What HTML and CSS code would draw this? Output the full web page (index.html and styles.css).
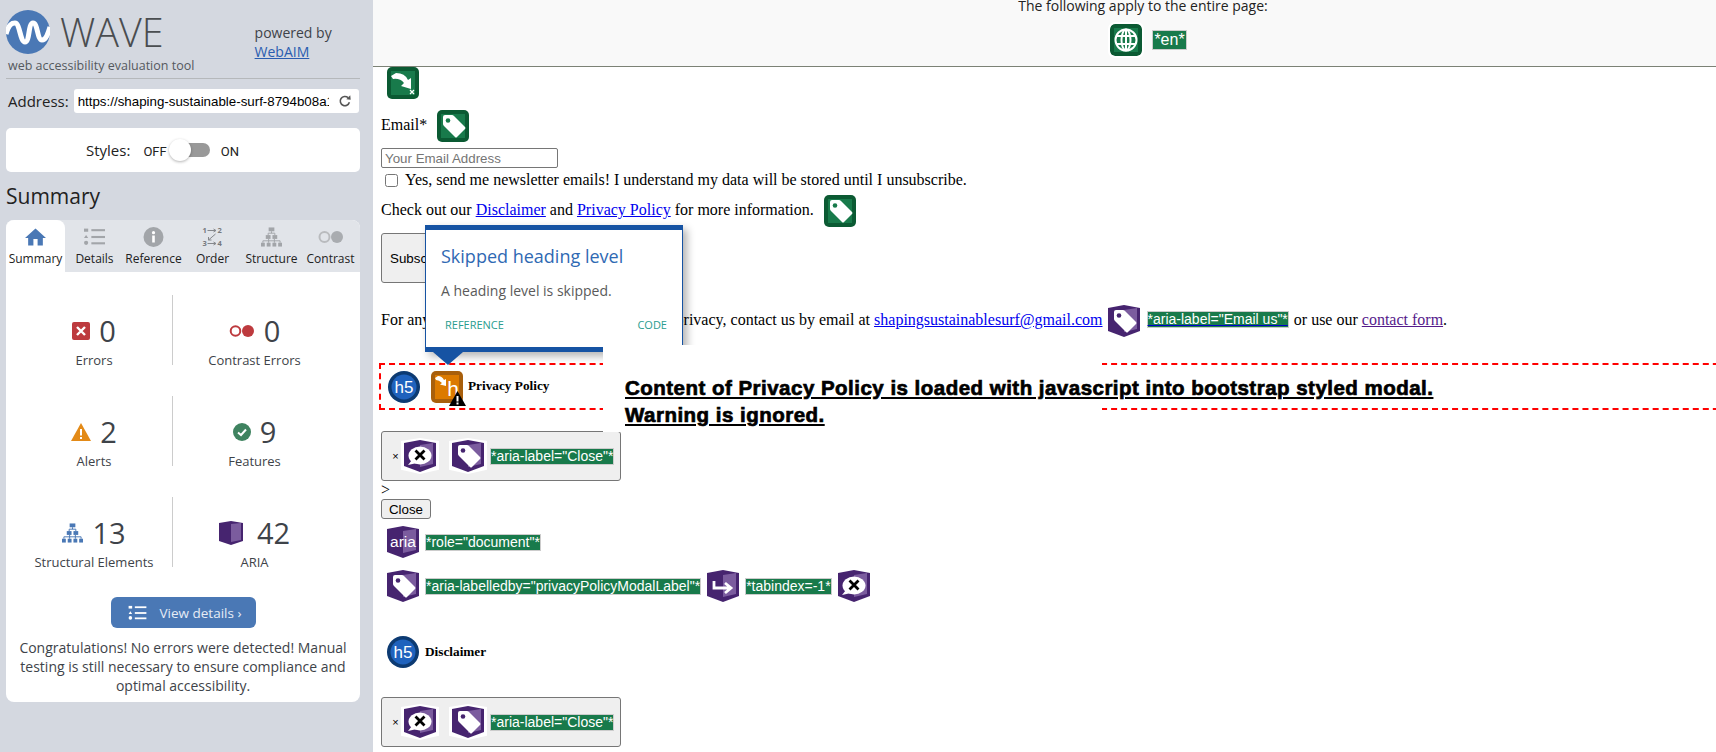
FILE: index.html
```html
<!DOCTYPE html>
<html lang="en">
<head>
  <meta charset="UTF-8">
  <title>WAVE Report</title>
  <link rel="stylesheet" href="styles.css">
</head>
<body>
  <svg class="defs" aria-hidden="true">
    <symbol id="bg-green" viewBox="0 0 32 32">
      <rect width="32" height="32" rx="5" fill="#0b5a33"/>
      <rect x="4" y="4" width="24" height="24" fill="#187a4b"/>
    </symbol>
    <symbol id="bg-purple" viewBox="0 0 32 32">
      <path d="M0 3 16 0 32 3V26L16 32 0 26Z" fill="#46246f"/>
      <path d="M16 5 29 3V24L16 27Z" fill="#7b5c9e"/>
    </symbol>
    <symbol id="tag" viewBox="0 0 32 32">
      <path d="M6 7q0-2 2-2h7q1 0 2 1l11 11q1 1 0 2l-8 8q-1 1-2 0L7 16q-1-1-1-2Z" fill="#fff"/>
    </symbol>
    <symbol id="talk" viewBox="0 0 32 32">
      <ellipse cx="16" cy="15.500" rx="11.500" ry="9" fill="#fff"/>
      <path d="M8 20 4 25 13 23Z" fill="#fff"/>
      <path d="M11.500 10.500 20.500 19.500M20.500 10.500 11.500 19.500" stroke="#000" stroke-width="2.800"/>
    </symbol>
    <symbol id="skip" viewBox="0 0 32 32">
      <path d="M4 9 9 6Q18 6 21 13L24 11 24 22 14 19 17 16Q13 11 6 12Z" fill="#fff"/>
    </symbol>
  </svg>

  <aside class="sidebar">
    <div class="brand">
      <svg class="logo" viewBox="0 0 44 44">
        <circle cx="22" cy="22" r="22" fill="#4a78b5"/>
        <path d="M0 24C3 14 6 13 9 13 14 13 14 32 19 32 24 32 22 13 27 13 32 13 31 30 36 30 40 30 42 24 44 17" fill="none" stroke="#fff" stroke-width="5"/>
      </svg>
      <div class="brand-name">WAVE</div>
      <div class="powered">powered by<br><a href="#">WebAIM</a></div>
    </div>
    <div class="tagline">web accessibility evaluation tool</div>

    <div class="address">
      <span>Address:</span>
      <div class="address-box">
        <span class="address-url">https://shaping-sustainable-surf-8794b08a1</span>
        <svg class="reload" viewBox="0 0 16 16"><path d="M13 9.500A5.300 5.300 0 1 1 11.500 4.200" fill="none" stroke="#555" stroke-width="1.800"/><path d="M9.500 6 14.500 6.500 14 1.500Z" fill="#555"/></svg>
      </div>
    </div>

    <div class="styles-card">
      <span class="styles-label">Styles:</span>
      <span class="styles-off">OFF</span>
      <span class="toggle"><span class="knob"></span></span>
      <span class="styles-on">ON</span>
    </div>

    <h1 class="summary-title">Summary</h1>

    <div class="panel">
      <div class="tabs">
        <div class="tab active">
          <svg viewBox="0 0 20 18"><path d="M10 1 0 10H3V17H8V11H12V17H17V10H20Z" fill="#4a78b5"/></svg>
          Summary
        </div>
        <div class="tab">
          <svg viewBox="0 0 20 18"><g fill="#a2a5a9"><rect x="0" y="1" width="4" height="3"/><path d="M2 7 4 10H0Z"/><circle cx="2" cy="14.500" r="2"/><rect x="7" y="1.500" width="13" height="2"/><rect x="7" y="8" width="13" height="2"/><rect x="7" y="14" width="13" height="2"/></g></svg>
          Details
        </div>
        <div class="tab">
          <svg viewBox="0 0 20 20"><circle cx="10" cy="10" r="10" fill="#a2a5a9"/><rect x="8.700" y="8.500" width="2.600" height="7" fill="#fff"/><circle cx="10" cy="5.700" r="1.600" fill="#fff"/></svg>
          Reference
        </div>
        <div class="tab">
          <svg viewBox="0 0 20 20"><g fill="#77797d" font-family="Open Sans" font-weight="700" font-size="7.500"><text x="0" y="6">1</text><text x="15" y="6">2</text><text x="0" y="19">3</text><text x="15" y="19">4</text></g><path d="M5 3.500H13M11 2 13.500 3.500 11 5M13 7 6 13M6 10V13H9M5 16.500H13M11 15 13.500 16.500 11 18" fill="none" stroke="#85878b" stroke-width="1"/></svg>
          Order
        </div>
        <div class="tab">
          <svg viewBox="0 0 22 20"><g fill="#a2a5a9"><rect x="8" y="0" width="6" height="4"/><rect x="5" y="8" width="5" height="4"/><rect x="12" y="8" width="5" height="4"/><rect x="0" y="16" width="4" height="4"/><rect x="6" y="16" width="4" height="4"/><rect x="12" y="16" width="4" height="4"/><rect x="18" y="16" width="4" height="4"/></g><path d="M11 4V6M2 16V14H20V16M8 16V12M14 16V12M7.500 8V6H14.500V8" fill="none" stroke="#a2a5a9"/></svg>
          Structure
        </div>
        <div class="tab">
          <svg class="contrast-icon" viewBox="0 0 26 14"><circle cx="6.500" cy="7" r="5" fill="none" stroke="#b9bbbe" stroke-width="2"/><circle cx="19" cy="7" r="6" fill="#a9acb0"/></svg>
          Contrast
        </div>
      </div>

      <div class="stats">
        <div class="stat divided">
          <div class="stat-top">
            <svg class="stat-icon" width="18" height="18" viewBox="0 0 18 18"><rect width="18" height="18" rx="2" fill="#bd3a3e"/><path d="M5 5 13 13M13 5 5 13" stroke="#fff" stroke-width="2.400"/></svg>
            <span class="num">0</span>
          </div>
          <div class="stat-label">Errors</div>
        </div>
        <div class="stat">
          <div class="stat-top">
            <svg class="stat-icon" width="26" height="14" viewBox="0 0 26 14"><circle cx="6.500" cy="7" r="4.800" fill="none" stroke="#bd3a3e" stroke-width="2"/><circle cx="19" cy="7" r="6" fill="#bd3a3e"/></svg>
            <span class="num">0</span>
          </div>
          <div class="stat-label">Contrast Errors</div>
        </div>
        <div class="stat divided">
          <div class="stat-top">
            <svg class="stat-icon" width="20" height="18" viewBox="0 0 20 18"><path d="M10 0 20 18H0Z" fill="#e38a17"/><rect x="9" y="6" width="2" height="6.500" fill="#fff"/><rect x="9" y="14" width="2" height="2" fill="#fff"/></svg>
            <span class="num">2</span>
          </div>
          <div class="stat-label">Alerts</div>
        </div>
        <div class="stat">
          <div class="stat-top">
            <svg class="stat-icon" width="18" height="18" viewBox="0 0 18 18"><circle cx="9" cy="9" r="9" fill="#3f8360"/><path d="M5 9.500 8 12 13 6.500" fill="none" stroke="#fff" stroke-width="2"/></svg>
            <span class="num">9</span>
          </div>
          <div class="stat-label">Features</div>
        </div>
        <div class="stat divided">
          <div class="stat-top">
            <svg class="stat-icon" width="21" height="20" viewBox="0 0 22 20"><g fill="#4a78b5"><rect x="8" y="0" width="6" height="4"/><rect x="5" y="8" width="5" height="4"/><rect x="12" y="8" width="5" height="4"/><rect x="0" y="16" width="4" height="4"/><rect x="6" y="16" width="4" height="4"/><rect x="12" y="16" width="4" height="4"/><rect x="18" y="16" width="4" height="4"/></g><path d="M11 4V6M2 16V14H20V16M8 16V12M14 16V12M7.500 8V6H14.500V8" fill="none" stroke="#4a78b5"/></svg>
            <span class="num">13</span>
          </div>
          <div class="stat-label">Structural Elements</div>
        </div>
        <div class="stat">
          <div class="stat-top wide-gap">
            <svg class="stat-icon" width="24" height="24" viewBox="0 0 24 24"><path d="M0 2 12 0 24 2V20L12 24 0 20Z" fill="#46246f"/><path d="M12 3 22 2V19L12 21Z" fill="#7b5c9e"/></svg>
            <span class="num">42</span>
          </div>
          <div class="stat-label">ARIA</div>
        </div>
      </div>

      <button class="view-details">
        <svg width="19" height="16" viewBox="0 0 20 18"><g fill="#fff"><rect x="0" y="1" width="4" height="3"/><path d="M2 7 4 10H0Z"/><circle cx="2" cy="14.500" r="2"/><rect x="7" y="1.500" width="13" height="2"/><rect x="7" y="8" width="13" height="2"/><rect x="7" y="14" width="13" height="2"/></g></svg>
        <span>View details ›</span>
      </button>
      <p class="congrats">Congratulations! No errors were detected! Manual testing is still necessary to ensure compliance and optimal accessibility.</p>
    </div>
  </aside>

  <main class="report">
    <div class="page-bar">
      <div class="page-bar-text">The following apply to the entire page:</div>
      <div class="page-bar-items">
        <svg class="ico globe" viewBox="0 0 32 32">
          <use href="#bg-green"/>
          <g fill="none" stroke="#fff" stroke-width="2"><circle cx="16" cy="16" r="10.500"/><ellipse cx="16" cy="16" rx="4.500" ry="10.500"/><path d="M16 5.500V26.500M6.500 12H25.500M6.500 20H25.500"/></g>
        </svg>
        <span class="attr">*en*</span>
      </div>
    </div>

    <div class="content">
      <div class="row first-icon">
        <svg class="ico" viewBox="0 0 32 32"><use href="#bg-green"/><use href="#skip"/><path d="M23 23 27 27M27 23 23 27" stroke="#fff" stroke-width="1.300"/></svg>
      </div>

      <div class="row email-row">
        <span class="lift">Email*</span>
        <svg class="ico" viewBox="0 0 32 32"><use href="#bg-green"/><use href="#tag"/><circle cx="11" cy="10.500" r="2.300" fill="#187a4b"/></svg>
      </div>

      <input class="email-input" type="text" placeholder="Your Email Address">

      <div class="check-row">
        <input class="check" type="checkbox">
        <span>Yes, send me newsletter emails! I understand my data will be stored until I unsubscribe.</span>
      </div>

      <div class="row check-out">
        <span class="lift">Check out our <a href="#">Disclaimer</a> and <a href="#">Privacy Policy</a> for more information.</span>
        <svg class="ico" viewBox="0 0 32 32"><use href="#bg-green"/><use href="#tag"/><circle cx="11" cy="10.500" r="2.300" fill="#187a4b"/></svg>
      </div>

      <button class="subscribe">Subscribe</button>

      <div class="row contact">
        <span class="lift">For any questions or concerns regarding your privacy, contact us by email at <a href="#">shapingsustainablesurf@gmail.com</a></span>
        <svg class="ico" viewBox="0 0 32 32"><use href="#bg-purple"/><use href="#tag"/><circle cx="11" cy="10.500" r="2.300" fill="#46246f"/></svg>
        <a class="attr attr-link" href="#">*aria-label="Email us"*</a>
        <span class="drop">or use our <a class="visited" href="#">contact form</a>.</span>
      </div>

      <div class="flagged row">
        <svg class="ico" viewBox="0 0 32 32"><circle cx="16" cy="16" r="16" fill="#0c3a72"/><circle cx="16" cy="16" r="12.500" fill="#1f62bd"/><text x="16" y="22" text-anchor="middle" fill="#fff" font-family="Liberation Sans" font-size="17">h5</text></svg>
        <span class="warn-icon">
          <svg class="ico" viewBox="0 0 32 32"><rect width="32" height="32" rx="5" fill="#a85f0c"/><rect x="4" y="4" width="24" height="24" fill="#dc7a00"/><path d="M4 7 7 5Q11 5 13 9L15 8 15 15 9 13.500 11 12Q8 9 5 9Z" fill="#fff"/><text x="22" y="25" text-anchor="middle" fill="#fff" font-family="Liberation Sans" font-size="21">h</text></svg>
          <svg class="warn-badge" viewBox="0 0 17 15"><path d="M8.500 0 17 15H0Z" fill="#000"/><rect x="7.500" y="5" width="2" height="5.500" fill="#fff"/><rect x="7.500" y="11.500" width="2" height="2" fill="#fff"/></svg>
        </span>
        <h5 class="heading">Privacy Policy</h5>
      </div>

      <button class="close-x">
        <span class="times">×</span>
        <svg class="ico halo" viewBox="0 0 32 32"><use href="#bg-purple"/><use href="#talk"/></svg>
        <svg class="ico halo" viewBox="0 0 32 32"><use href="#bg-purple"/><use href="#tag"/><circle cx="11" cy="10.500" r="2.300" fill="#46246f"/></svg>
        <span class="attr">*aria-label="Close"*</span>
      </button>
      <div class="stray">&gt;</div>
      <button class="close-btn">Close</button>

      <div class="row aria-row">
        <svg class="ico" viewBox="0 0 32 32"><use href="#bg-purple"/><text x="16" y="21" text-anchor="middle" fill="#fff" font-family="Liberation Sans" font-size="15.500">aria</text></svg>
        <span class="attr">*role="document"*</span>
      </div>

      <div class="row labelled-row">
        <svg class="ico" viewBox="0 0 32 32"><use href="#bg-purple"/><use href="#tag"/><circle cx="11" cy="10.500" r="2.300" fill="#46246f"/></svg>
        <span class="attr">*aria-labelledby="privacyPolicyModalLabel"*</span>
        <svg class="ico" viewBox="0 0 32 32"><use href="#bg-purple"/><path d="M7 11V18H23M18 13 24 18 18 23" fill="none" stroke="#fff" stroke-width="2.800"/></svg>
        <span class="attr">*tabindex=-1*</span>
        <svg class="ico" viewBox="0 0 32 32"><use href="#bg-purple"/><use href="#talk"/></svg>
      </div>

      <div class="row disclaimer-row">
        <svg class="ico" viewBox="0 0 32 32"><circle cx="16" cy="16" r="16" fill="#0c3a72"/><circle cx="16" cy="16" r="12.500" fill="#1f62bd"/><text x="16" y="22" text-anchor="middle" fill="#fff" font-family="Liberation Sans" font-size="17">h5</text></svg>
        <h5 class="heading">Disclaimer</h5>
      </div>

      <button class="close-x second">
        <span class="times">×</span>
        <svg class="ico halo" viewBox="0 0 32 32"><use href="#bg-purple"/><use href="#talk"/></svg>
        <svg class="ico halo" viewBox="0 0 32 32"><use href="#bg-purple"/><use href="#tag"/><circle cx="11" cy="10.500" r="2.300" fill="#46246f"/></svg>
        <span class="attr">*aria-label="Close"*</span>
      </button>
    </div>
  </main>

  <div class="callout">
    <h3>Skipped heading level</h3>
    <p>A heading level is skipped.</p>
    <div class="callout-links"><a href="#">REFERENCE</a><a href="#">CODE</a></div>
    <span class="callout-arrow"></span>
  </div>

  <div class="note">
    <p>Content of Privacy Policy is loaded with javascript into bootstrap styled modal.</p>
    <p>Warning is ignored.</p>
  </div>
</body>
</html>
```

FILE: styles.css
```css
* {
  box-sizing: border-box;
}
html, body {
  height: 752px;
  overflow: hidden;
}
body {
  margin: 0;
  display: flex;
  font-family: "Liberation Serif", serif;
  font-size: 16px;
  background-color: #fff;
  color: #000;
}
.defs {
  position: absolute;
  width: 0;
  height: 0;
}

/* sidebar */
.sidebar {
  width: 373px;
  flex: none;
  padding: 10px 13px 0 6px;
  background-color: #d4d8e0;
  font-family: "Open Sans", sans-serif;
  color: #3e4349;
}
.brand {
  display: flex;
  height: 44px;
}
.logo {
  width: 44px;
  height: 44px;
}
.brand-name {
  margin-left: 10px;
  font-size: 39.5px;
  font-weight: 300;
  line-height: 44px;
  color: #4a4d50;
}
.powered {
  margin: 13px 0 0 91px;
  font-size: 14px;
  line-height: 19px;
}
.powered a {
  color: #2a5db0;
}
.tagline {
  margin-top: 3px;
  padding: 0 0 4px 2px;
  border-bottom: 1px solid #b5b8bb;
  font-size: 12.5px;
  line-height: 17px;
  color: #55595e;
}
.address {
  display: flex;
  align-items: center;
  margin-top: 10px;
  padding-left: 2px;
  font-size: 15px;
  color: #222;
}
.address-box {
  display: flex;
  align-items: center;
  justify-content: space-between;
  width: 285px;
  height: 24px;
  margin-left: 5px;
  padding: 0 7px 0 4px;
  border-radius: 3px;
  background-color: #fff;
}
.address-url {
  width: 251px;
  overflow: hidden;
  white-space: nowrap;
  font-family: "Liberation Sans", sans-serif;
  font-size: 13.33px;
  color: #000;
}
.reload {
  width: 14px;
  height: 14px;
}
.styles-card {
  display: flex;
  align-items: center;
  height: 44px;
  margin-top: 15px;
  padding-left: 80px;
  border-radius: 5px;
  background-color: #fff;
  color: #222;
}
.styles-label {
  font-size: 15px;
}
.styles-off, .styles-on {
  font-family: Roboto, sans-serif;
  font-size: 13px;
  margin-top: 2px;
}
.styles-off {
  margin-left: 13px;
}
.toggle {
  position: relative;
  width: 40px;
  height: 14px;
  margin-left: 3px;
  border-radius: 7px;
  background-color: #999;
}
.knob {
  position: absolute;
  top: -4px;
  left: -1px;
  width: 22px;
  height: 22px;
  border-radius: 50%;
  background-color: #fff;
  box-shadow: 0 1px 3px rgba(0,0,0,0.3);
}
.styles-on {
  margin-left: 11px;
}
.summary-title {
  margin: 7px 0 7px 0;
  font-size: 21px;
  font-weight: 400;
  line-height: 34px;
  color: #222;
}
.panel {
  height: 482px;
  border-radius: 8px;
  background-color: #fff;
}
.tabs {
  display: flex;
  height: 52px;
  border-radius: 8px 8px 0 0;
  background-color: #e1e4e9;
}
.tab {
  display: flex;
  flex-direction: column;
  align-items: center;
  justify-content: space-between;
  width: 59px;
  padding: 7px 0 5px;
  font-size: 12px;
  line-height: 16px;
  white-space: nowrap;
  color: #222;
}
.tab svg {
  width: 21px;
  height: 20px;
}
.tab .contrast-icon {
  width: 26px;
}
.tab.active {
  border-radius: 8px 8px 0 0;
  background-color: #fff;
}
.stats {
  display: grid;
  grid-template-columns: 167px 1fr;
  grid-auto-rows: 70px;
  row-gap: 31px;
  padding-top: 23px;
}
.stat {
  display: flex;
  flex-direction: column;
  align-items: center;
  padding: 17px 24px 0 0;
}
.stat.divided {
  padding: 17px 0 0 10px;
  border-right: 1px solid #ccc;
}
.stat-top {
  display: flex;
  align-items: center;
  gap: 9px;
  height: 38px;
  flex: none;
}
.wide-gap {
  gap: 14px;
}
.num {
  font-size: 29px;
  line-height: 38px;
  color: #3e4349;
}
.stat-label {
  margin-top: 1px;
  font-size: 13px;
  line-height: 18px;
  white-space: nowrap;
}
.view-details {
  display: flex;
  align-items: center;
  gap: 13px;
  width: 145px;
  height: 31px;
  margin: 30px auto 0;
  padding: 0 0 0 17px;
  border: 0;
  border-radius: 6px;
  background-color: #4a78b5;
  font-family: "Open Sans", sans-serif;
  font-size: 13.5px;
  color: #e6ecf5;
}
.congrats {
  margin: 10px 10px 0;
  font-size: 14px;
  line-height: 19px;
  text-align: center;
}

/* report */
.report {
  flex: 1;
  min-width: 0;
}
.page-bar {
  height: 67px;
  padding-left: 197px;
  border-bottom: 1px solid #7c8276;
  background-color: #f9f9f9;
  text-align: center;
  font-family: "Open Sans", sans-serif;
  font-size: 14px;
}
.page-bar-text {
  line-height: 11px;
  color: #222;
}
.page-bar-items {
  display: flex;
  justify-content: center;
  align-items: center;
  gap: 10px;
  margin-top: 13px;
  padding-left: 11px;
}
.globe {
  border-radius: 5px;
  box-shadow: 0 0 0 2px #fff;
}
.ico {
  flex: none;
  display: block;
  width: 32px;
  height: 32px;
}
.attr {
  display: inline-block;
  border: 1px solid #ccc;
  background-color: #187a4b;
  font-family: "Liberation Sans", sans-serif;
  font-size: 14px;
  line-height: 15px;
  white-space: nowrap;
  color: #fff;
}
.page-bar .attr {
  padding: 0 1px;
  font-size: 16px;
  line-height: 18px;
}
.attr-link {
  color: #fff;
  text-decoration: underline #00c;
}
.content {
  padding-left: 8px;
}
.row {
  display: flex;
  align-items: center;
}
.lift {
  margin-bottom: 2px;
  white-space: nowrap;
}
.drop {
  margin-bottom: 2px;
  white-space: nowrap;
}
.first-icon {
  margin-left: 6px;
}
.email-row {
  gap: 10px;
  margin-top: 11px;
}
.email-input {
  display: block;
  width: 177px;
  height: 20px;
  margin-top: 6px;
  padding: 1px 3px;
  border: 1px solid #767676;
  border-radius: 2px;
  font-family: "Liberation Sans", sans-serif;
  font-size: 13.33px;
}
.check-row {
  display: flex;
  align-items: center;
  height: 20px;
  margin-top: 2px;
  white-space: nowrap;
}
.check {
  width: 13px;
  height: 13px;
  margin: 0 7px 0 4px;
}
.check-out {
  gap: 10px;
  margin-top: 5px;
}
.subscribe {
  display: block;
  width: 200px;
  height: 50px;
  margin-top: 6px;
  padding: 0 8px;
  border: 1px solid #767676;
  border-radius: 3px;
  background-color: #efefef;
  font-family: "Liberation Sans", sans-serif;
  font-size: 13.33px;
  text-align: left;
}
.contact {
  gap: 5px;
  margin-top: 22px;
}
.contact .attr {
  margin-left: 2px;
  margin-bottom: 3px;
}
.visited {
  color: #551a8b;
}
.flagged {
  width: 1400px;
  height: 47px;
  margin: 26px 0 0 -2px;
  padding-left: 7px;
  border: 2px dashed #f00;
  gap: 11px;
}
.warn-icon {
  position: relative;
  display: block;
  margin-right: -6px;
}
.warn-badge {
  position: absolute;
  right: -3px;
  bottom: -3px;
  width: 17px;
  height: 15px;
}
.heading {
  margin: 0;
  font-size: 13.28px;
  white-space: nowrap;
}
.flagged .heading {
  margin-bottom: 2px;
}
.close-x {
  display: flex;
  align-items: center;
  width: 240px;
  height: 50px;
  margin-top: 21px;
  padding: 0 0 0 8px;
  border: 1px solid #767676;
  border-radius: 3px;
  background-color: #efefef;
}
.close-x .attr {
  margin-left: 3px;
}
.times {
  width: 11px;
  font-family: "Liberation Sans", sans-serif;
  font-size: 11px;
}
.halo {
  width: 38px;
  height: 36px;
  padding: 2px 3px;
  background-color: #fff;
  clip-path: polygon(0 8%, 50% 0, 100% 8%, 100% 88%, 50% 100%, 0 88%);
}
.halo + .halo {
  margin-left: 10px;
}
.stray {
  height: 18px;
  line-height: 18px;
}
.close-btn {
  display: block;
  width: 50px;
  height: 20px;
  padding: 0;
  border: 1px solid #767676;
  border-radius: 3px;
  background-color: #efefef;
  font-family: "Liberation Sans", sans-serif;
  font-size: 13.33px;
}
.aria-row {
  gap: 6px;
  margin: 7px 0 0 6px;
}
.labelled-row {
  gap: 6px;
  margin: 12px 0 0 6px;
}
.disclaimer-row {
  gap: 6px;
  margin: 34px 0 0 6px;
}
.close-x.second {
  margin-top: 29px;
}

/* notes over the report */
.note {
  position: absolute;
  top: 345px;
  left: 603px;
  width: 499px;
  height: 87px;
  padding: 29px 0 0 22px;
  background-color: #fff;
  font-family: "Liberation Sans", sans-serif;
  font-size: 20.5px;
  font-weight: 700;
  line-height: 27px;
  letter-spacing: 0.48px;
  text-decoration: underline;
  white-space: nowrap;
  -webkit-text-stroke: 0.7px #000;
}
.note p {
  margin: 0;
}
.callout {
  position: absolute;
  top: 225px;
  left: 425px;
  width: 258px;
  height: 127px;
  padding: 13px 15px 0;
  border: 1px solid #1653a3;
  border-width: 5px 1px;
  background-color: #fff;
  box-shadow: 4px 4px 8px rgba(0,0,0,0.3);
  font-family: "Open Sans", sans-serif;
}
.callout h3 {
  margin: 0;
  font-size: 18px;
  font-weight: 400;
  line-height: 26px;
  color: #2f69b3;
}
.callout p {
  margin: 12px 0 0;
  font-size: 14px;
  line-height: 20px;
  color: #5a5a5a;
}
.callout-links {
  display: flex;
  justify-content: space-between;
  margin-top: 17px;
  padding: 0 0 0 4px;
  font-size: 11px;
  line-height: 14px;
}
.callout-links a {
  color: #2a9d8f;
  text-decoration: none;
}
.callout-arrow {
  position: absolute;
  bottom: -18px;
  left: 7px;
  width: 0;
  height: 0;
  border-left: 15px solid transparent;
  border-right: 15px solid transparent;
  border-top: 13px solid #1653a3;
}
```
